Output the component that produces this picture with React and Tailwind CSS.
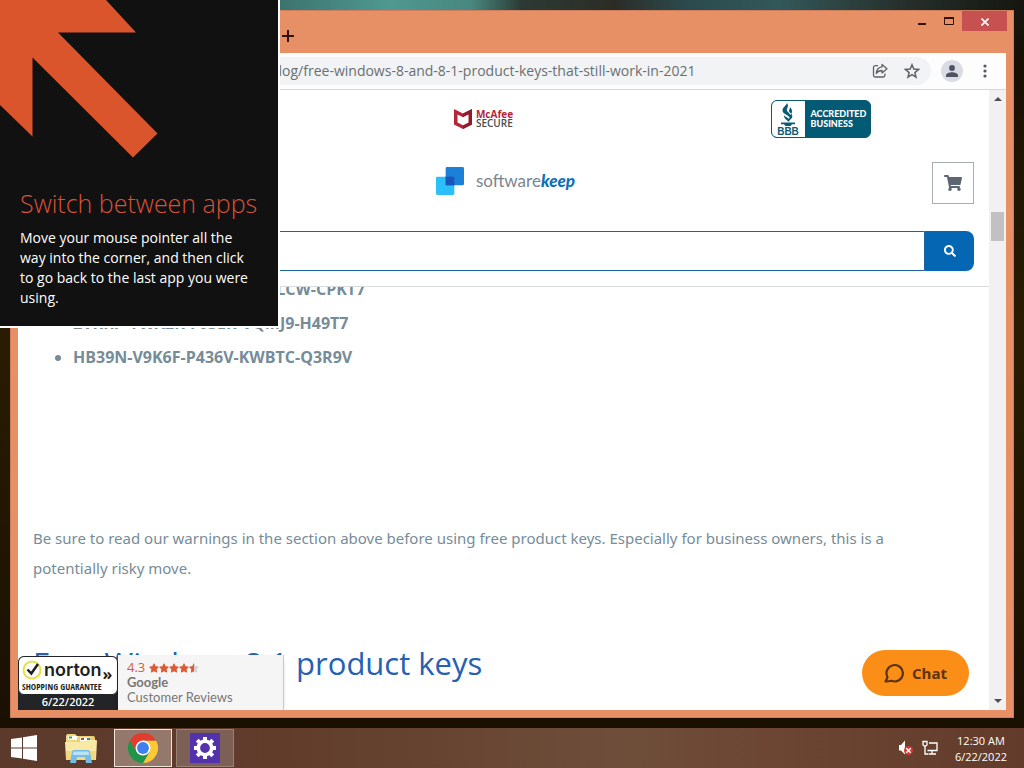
import { FaSearch, FaShoppingCart, FaStar, FaStarHalf } from "react-icons/fa";

export default function App() {
  return (
    <div className="relative flex h-screen flex-col overflow-hidden bg-[#1c1205] font-['Open_Sans','Noto_Sans',sans-serif]">
      <main className="flex min-h-0 flex-1 bg-[linear-gradient(90deg,#1c1204_0%,#2f5a58_20%,#4f9890_38%,#478880_46%,#2b3a33_51%,#2c2c26_60%,#2b4a4e_67%,#33585a_76%,#26302c_88%,#15160f_100%)]">
        <div className="flex min-h-0 flex-1 bg-[linear-gradient(180deg,transparent_0,transparent_10px,#171003_60px,#2a1c02_330px,#1a1002_100%)] p-[10px]">
          <BrowserWindow />
        </div>
      </main>
      <Taskbar />
      <CornerHint />
    </div>
  );
}

function BrowserWindow() {
  return (
    <section className="flex min-w-0 flex-1 flex-col border border-[#cf7d5b] bg-[#e89065] px-[7px] pb-[7px]">
      <TitleBar />
      <Toolbar />
      <div className="flex min-h-0 flex-1 bg-white">
        <Page />
        <Scrollbar />
      </div>
    </section>
  );
}

function TitleBar() {
  return (
    <div className="-mr-px flex h-[42px] shrink-0 justify-between">
      <button aria-label="New tab" className="ml-[264px] mt-[19px] h-3 w-3 text-[#33120a]">
        <svg viewBox="0 0 12 12" className="h-3 w-3" stroke="currentColor" strokeWidth="2">
          <path d="M6 0v12M0 6h12" />
        </svg>
      </button>
      <div className="flex h-5 items-center text-[#33120a]">
        <button aria-label="Minimize" className="flex h-5 w-[27px] items-center justify-center">
          <svg viewBox="0 0 8 12" className="h-3 w-2">
            <path d="M0 8h8v2H0z" fill="currentColor" />
          </svg>
        </button>
        <button aria-label="Maximize" className="flex h-5 w-[27px] items-center justify-center">
          <svg viewBox="0 0 10 8" className="h-2 w-[10px]" fill="none" stroke="currentColor">
            <path d="M.5 1v6.5h9V1" />
            <path d="M0 1h10" strokeWidth="2" />
          </svg>
        </button>
        <button aria-label="Close" className="flex h-5 w-[45px] items-center justify-center bg-[#c75050] pt-px pl-px text-white">
          <svg viewBox="0 0 8 8" className="h-2 w-2" stroke="currentColor" strokeWidth="1.6">
            <path d="M.5.5l7 7M7.5.5l-7 7" />
          </svg>
        </button>
      </div>
    </div>
  );
}

function Toolbar() {
  return (
    <div className="flex h-[37px] shrink-0 items-center border-b border-[#d5d7da] bg-[#fdfdfd] pr-[11px]">
      <div className="ml-[120px] flex h-7 min-w-0 flex-1 items-center rounded-r-full bg-[#f1f3f4] pl-[132px] pr-[11px] text-[#5f6368]">
        <input
          aria-label="Address"
          defaultValue="blog/free-windows-8-and-8-1-product-keys-that-still-work-in-2021"
          className="min-w-0 flex-1 bg-transparent text-sm text-[#6b6f73] outline-none"
        />
        <button aria-label="Share" className="mr-4">
          <svg viewBox="0 0 16 16" className="h-4 w-4" fill="none" stroke="currentColor" strokeWidth="1.3" strokeLinejoin="round">
            <path d="M6 2.6H3.2A1.7 1.7 0 0 0 1.5 4.3v8A1.7 1.7 0 0 0 3.2 14h8a1.7 1.7 0 0 0 1.7-1.7V10.5" />
            <path d="M10 1.5l5 4.2-5 4.2V7.5C7.3 7.5 5.500 8.5 4.3 10.5 4.6 7 6.5 4.3 10 3.9z" />
          </svg>
        </button>
        <button aria-label="Bookmark">
          <svg viewBox="0 0 16 16" className="h-4 w-4" fill="none" stroke="currentColor" strokeWidth="1.5">
            <path d="M8 1.8l1.8 4.3 4.7.4-3.6 3.1 1.1 4.6L8 11.7l-4 2.5 1.1-4.6L1.5 6.5l4.7-.4z" />
          </svg>
        </button>
      </div>
      <button aria-label="Profile" className="ml-[10px] flex h-[22px] w-[22px] items-center justify-center rounded-full bg-[#dadce4] text-[#4d5363]">
        <svg viewBox="0 0 12 12" className="h-3 w-3" fill="currentColor">
          <circle cx="6" cy="3" r="2.9" />
          <path d="M0 12v-1.5C0 8.2 3.5 7.3 6 7.3s6 .9 6 3.2V12z" />
        </svg>
      </button>
      <button aria-label="Menu" className="ml-3 flex w-5 justify-center text-[#55585c]">
        <svg viewBox="0 0 4 14" className="h-[14px] w-1" fill="currentColor">
          <circle cx="2" cy="2" r="1.6" />
          <circle cx="2" cy="7" r="1.6" />
          <circle cx="2" cy="12" r="1.6" />
        </svg>
      </button>
    </div>
  );
}

function Scrollbar() {
  return (
    <div className="flex w-[17px] shrink-0 flex-col items-center bg-[#f1f1f1] text-[#505050]">
      <svg viewBox="0 0 8 4" className="mt-[7px] h-1 w-2" fill="currentColor">
        <path d="M0 4l4-4 4 4z" />
      </svg>
      <div className="mt-[111px] h-[29px] w-[13px] bg-[#c1c1c1]" />
      <svg viewBox="0 0 8 4" className="mb-[7px] mt-auto h-1 w-2" fill="currentColor">
        <path d="M0 0l4 4 4-4z" />
      </svg>
    </div>
  );
}

function Page() {
  return (
    <div className="relative min-w-0 flex-1 overflow-hidden bg-white">
      <SiteHeader />
      <article className="-mt-[15px] px-[15px] text-[15px] leading-[30px] text-[#768c98]">
        <ul className="list-disc pl-10 text-base font-bold leading-[34px] marker:text-[#768c98]">
          <li>XHVNP-W27MK-9RQ3D-T8LCW-CPKT7</li>
          <li>2VKRP-YWX2K-F63ER-VQMJ9-H49T7</li>
          <li>HB39N-V9K6F-P436V-KWBTC-Q3R9V</li>
        </ul>
        <p className="mt-[149px] font-['Noto_Sans','Open_Sans',sans-serif]">
          Be sure to read our warnings in the section above before using free product keys. Especially for business owners, this is a
          <br />
          potentially risky move.
        </p>
        <h2 className="mt-[60px] text-[31px] leading-10 text-[#2560b5]">Free Windows 8.1 product keys</h2>
      </article>
      <ReviewBadges />
      <button className="absolute bottom-[14px] right-5 flex h-[46px] w-[107px] items-center justify-center gap-2 rounded-full bg-[#fa8e17] text-[15px] font-bold text-[#5c3210]">
        <svg viewBox="0 0 20 20" className="h-5 w-5" fill="none" stroke="currentColor" strokeWidth="2.2" strokeLinejoin="round">
          <path d="M1.5 18.5l2-4.3A8.2 8.2 0 1 1 7.5 17.8C5.5 18.3 3.5 18.5 1.5 18.5z" />
        </svg>
        Chat
      </button>
    </div>
  );
}

function SiteHeader() {
  return (
    <header className="relative z-10 overflow-hidden border-b border-[#d9dcdf] bg-white pb-[15px]">
      <div className="-ml-10 grid h-[58px] grid-cols-3 items-center justify-items-center">
        <McAfeeBadge />
        <BbbBadge />
      </div>
      <div className="mt-[14px] grid grid-cols-3 items-center px-[15px]">
        <a href="#home" className="col-start-2 flex items-center gap-3 justify-self-center pb-1 pl-1">
          <svg viewBox="0 0 29 29" className="h-7 w-7">
            <rect x="0" y="10" width="19" height="19" rx="1.5" fill="#2cc0fa" />
            <rect x="10" y="0" width="19" height="19" rx="1.5" fill="#1c80d8" />
            <rect x="10" y="10" width="9" height="9" fill="#1a55bd" />
          </svg>
          <span className="font-['Lato',sans-serif] text-[17px] leading-6 text-[#7b858e]">
            software<b className="font-black italic text-[#0f6fb8]">keep</b>
          </span>
        </a>
        <button aria-label="Cart" className="flex h-[42px] w-[42px] items-center justify-center justify-self-end border border-[#a9adb2] text-[#5c6673]">
          <FaShoppingCart className="h-[18px] w-[18px]" />
        </button>
      </div>
      <form className="mx-[15px] mt-[27px] flex h-10" onSubmit={(e) => e.preventDefault()}>
        <input aria-label="Search" className="min-w-0 flex-1 rounded-l-lg border border-[#1b639c] bg-white px-3 outline-none" />
        <button aria-label="Submit search" className="flex w-[49px] items-center justify-center rounded-r-lg bg-[#0567b4] text-white">
          <FaSearch className="h-3 w-3" />
        </button>
      </form>
    </header>
  );
}

function McAfeeBadge() {
  return (
    <div className="col-start-2 flex items-center gap-1">
      <svg viewBox="0 0 18 20" className="h-5 w-[18px]">
        <path d="M0 0l9 4.5L18 0v15.5L9 20 0 15.5z" fill="#b5263b" />
        <path d="M9 4.5L18 0v15.5L9 20v-3.500l5.500-2.700V5.500L9 8z" fill="#8d1c30" />
        <path d="M3.5 5.5L9 8.200l5.500-2.700v8L9 16.200l-5.500-2.700z" fill="#fff" />
      </svg>
      <div className="text-[10px] font-bold leading-[9px]">
        <div className="text-[#b5263b]">McAfee</div>
        <div className="font-semibold text-[#4a4a4e]">SECURE</div>
      </div>
    </div>
  );
}

function BbbBadge() {
  return (
    <div className="flex h-[38px] w-[100px] overflow-hidden rounded-md border border-[#0b5a74] bg-[#025a75] text-white">
      <div className="flex w-[33px] flex-col items-center bg-white pt-[2px] text-[#0b5a74]">
        <svg viewBox="0 0 16 24" className="h-6 w-4 shrink-0" fill="currentColor">
          <path d="M7 0C6.500 2.500 2.500 4 2.500 7.500c0 3.200 4.500 3.700 7.500 7 .8-2-.1-3.500-1.500-4.900C6.900 8 6.400 7 7.200 5.500 8.300 3.600 8.300 1.800 7 0z" />
          <path d="M9.800 4c.6 1.800-1 2.600-.8 4 .2 1.700 3.300 2.400 3.300 5.300 0 2.600-2.800 3.500-3.800 5.700-1-1.500-2.700-2.200-3.700-3.700-.7-1.100-.8-2-.4-3.100 1.100 2 3.600 2.300 4.500 3.800.9-1.300.8-2.800.3-3.700C12.800 11.200 13 6.400 9.800 4z" />
          <path d="M1 19.500h14v1.800h-3L10.500 23h-5L4 21.300H1z" />
        </svg>
        <span className="font-['Liberation_Sans',sans-serif] text-[10px] font-bold leading-[9px]">BBB</span>
      </div>
      <div className="flex flex-col justify-center pl-[6px] font-['Lato',sans-serif] text-[9px] font-black leading-[10px]">
        <span>ACCREDITED</span>
        <span>BUSINESS</span>
      </div>
    </div>
  );
}

function ReviewBadges() {
  return (
    <div className="absolute bottom-0 left-0 flex h-[55px]">
      <div className="mt-px w-[100px] overflow-hidden rounded-t-md bg-[#222427]">
        <div className="h-[39px] rounded-md border border-[#222427] bg-white pl-[3px] pt-1 text-[#1d1f22]">
          <div className="flex h-[18px] items-center">
            <svg viewBox="0 0 20 20" className="h-5 w-5 shrink-0" fill="none">
              <circle cx="10" cy="10" r="8.500" stroke="#e6e043" strokeWidth="2" />
              <path d="M5.500 9.500l3.800 4 6.700-9.500" stroke="#1d1f22" strokeWidth="2.500" />
            </svg>
            <span className="ml-[2px] font-['Inter','Open_Sans',sans-serif] text-lg font-semibold leading-4">norton</span>
            <span className="ml-px mt-2 text-base font-bold leading-4">»</span>
          </div>
          <div className="mt-[3px] whitespace-nowrap font-['Open_Sans_Condensed','Roboto_Condensed','Roboto',sans-serif] text-[9px] font-black leading-[10px]">
            SHOPPING GUARANTEE
          </div>
        </div>
        <div className="text-center text-[11px] font-semibold leading-[14px] text-white">6/22/2022</div>
      </div>
      <div className="w-[166px] border-r border-[#c9c9c9] bg-[#f5f5f5] pl-[9px] pt-[5px] font-['Lato',sans-serif] text-[13px] leading-[15px] text-[#777] shadow-md">
        <div className="flex items-center text-[#dc5a35]">
          <span className="mr-1 font-['Open_Sans',sans-serif]">4.3</span>
          <FaStar className="h-[10px] w-[10px]" />
          <FaStar className="h-[10px] w-[10px]" />
          <FaStar className="h-[10px] w-[10px]" />
          <FaStar className="h-[10px] w-[10px]" />
          <span className="relative h-[10px] w-[10px]">
            <FaStar className="absolute h-[10px] w-[10px] text-[#d4d4d4]" />
            <FaStarHalf className="absolute h-[10px] w-[10px]" />
          </span>
        </div>
        <div className="font-bold">Google</div>
        <div>Customer Reviews</div>
      </div>
    </div>
  );
}

function CornerHint() {
  return (
    <aside className="absolute left-0 top-0 z-20 h-[328px] w-[280px] border-b-2 border-r-2 border-white bg-[#111]">
      <svg viewBox="0 0 160 160" className="h-40 w-40">
        <path d="M0 0h106l30 32.5H58L157.5 133.5 133 157.500 32.500 57.500v79L0 105z" fill="#db552c" />
      </svg>
      <div className="pl-5 pr-4">
        <h1 className="mt-[26px] text-[25px] font-light leading-[34px] text-[#d8513a]">Switch between apps</h1>
        <p className="mt-2 text-sm leading-5 text-white">
          Move your mouse pointer all the
          <br />
          way into the corner, and then click
          <br />
          to go back to the last app you were using.
        </p>
      </div>
    </aside>
  );
}

function Taskbar() {
  return (
    <footer className="flex h-10 shrink-0 items-center bg-[linear-gradient(90deg,#5b3a2c_0%,#613c2b_28%,#674532_45%,#6e4e3a_60%,#6c4632_75%,#623b2b_100%)]">
      <button aria-label="Start" className="ml-[11px]">
        <svg viewBox="0 0 26 26" className="h-[26px] w-[26px]" fill="#fff">
          <path d="M0 4l11-1.6v10H0zM12 2.200L26 0v12.400H12zM0 13.600h11v10L0 22zM12 13.600h14V26l-14-2.200z" />
        </svg>
      </button>
      <button aria-label="File Explorer" className="ml-7">
        <ExplorerIcon />
      </button>
      <button aria-label="Chrome" className="ml-[17px] flex h-[38px] w-[58px] items-center justify-center border border-[#f3e3d6] bg-[#93786b]">
        <ChromeIcon />
      </button>
      <button aria-label="Settings" className="ml-1 flex h-[38px] w-[58px] items-center justify-center border border-[#9b8073] bg-[#7c6055]">
        <span className="flex h-[30px] w-[30px] items-center justify-center bg-[#5333ab]">
          <svg viewBox="0 0 24 24" className="h-6 w-6" fill="none" stroke="#fff">
            <circle cx="12" cy="12" r="6.700" strokeWidth="3.600" />
            <path d="M12 1v4M12 19v4M1 12h4M19 12h4M4.200 4.200L7 7M17 17l2.800 2.800M4.200 19.800L7 17M17 7l2.800-2.800" strokeWidth="4" />
          </svg>
        </span>
      </button>
      <div className="ml-auto flex items-center pr-[17px] text-white">
        <svg viewBox="0 0 16 16" className="h-4 w-4">
          <path d="M1 5h2l4-4.500v14L3 10.500H1z" fill="#fff" />
          <circle cx="10.500" cy="10.500" r="4.500" fill="#d43a35" />
          <path d="M8.300 8.300l4.400 4.400M12.700 8.300l-4.400 4.400" stroke="#fff" strokeWidth="1.500" />
        </svg>
        <svg viewBox="0 0 16 16" className="ml-2 h-4 w-4" fill="none" stroke="#fff" strokeWidth="1.300">
          <path d="M7 3h8v7.500H5.500M10 10.500v3M6.500 14h7.500M3 6v8h3" />
          <path d="M1 1.500h4V5L3 6.500 1 5z" />
        </svg>
        <div className="ml-[17px] pt-px text-center text-[11px] leading-4">
          <div>12:30 AM</div>
          <div>6/22/2022</div>
        </div>
      </div>
    </footer>
  );
}

function ExplorerIcon() {
  return (
    <svg viewBox="0 0 32 30" className="h-[30px] w-8">
      <path d="M1 3q0-2 2-2h7l2 2h7q1 0 1 1v20H1z" fill="#f0d67c" />
      <path d="M3 3h10v4H3z" fill="#fff" />
      <path d="M4 3.500h3v2H4z" fill="#3fa845" />
      <path d="M12 5q0-2 2-2h14q2 0 2 2v20H12z" fill="#ecd070" />
      <path d="M15 4.500h10v4H15z" fill="#fff" />
      <path d="M16 5h3v2h-3z" fill="#cc3f33" />
      <path d="M22 5h3v2h-3z" fill="#3b82c4" />
      <path d="M0 9h20l2-2h9q1 0 1 1l-1 19H1z" fill="#f8e9a6" />
      <path d="M1 18h30l-.5 9H1z" fill="#efd980" />
      <path d="M5 30l2-11q.3-2 2-2h14q1.700 0 2 2l2 11h-6l-1-6h-8l-1 6z" fill="#74bbe6" />
      <path d="M8 20q.3-1.500 1.500-1.500h13q1.200 0 1.500 1.500l.3 2H7.700z" fill="#b9e2f7" />
    </svg>
  );
}

function ChromeIcon() {
  return (
    <svg viewBox="0 0 48 48" className="h-[30px] w-[30px]">
      <path d="M24 12H44.800A24 24 0 0 1 24 48L34.400 30z" fill="#fcc934" />
      <path d="M34.400 30L24 48A24 24 0 0 1 3.200 12L13.600 30z" fill="#1e9548" />
      <path d="M24 12h20.800A24 24 0 0 0 3.200 12l10.400 18z" fill="#e33b2e" />
      <circle cx="24" cy="24" r="12" fill="#fff" />
      <circle cx="24" cy="24" r="9.500" fill="#3f80ee" />
    </svg>
  );
}
